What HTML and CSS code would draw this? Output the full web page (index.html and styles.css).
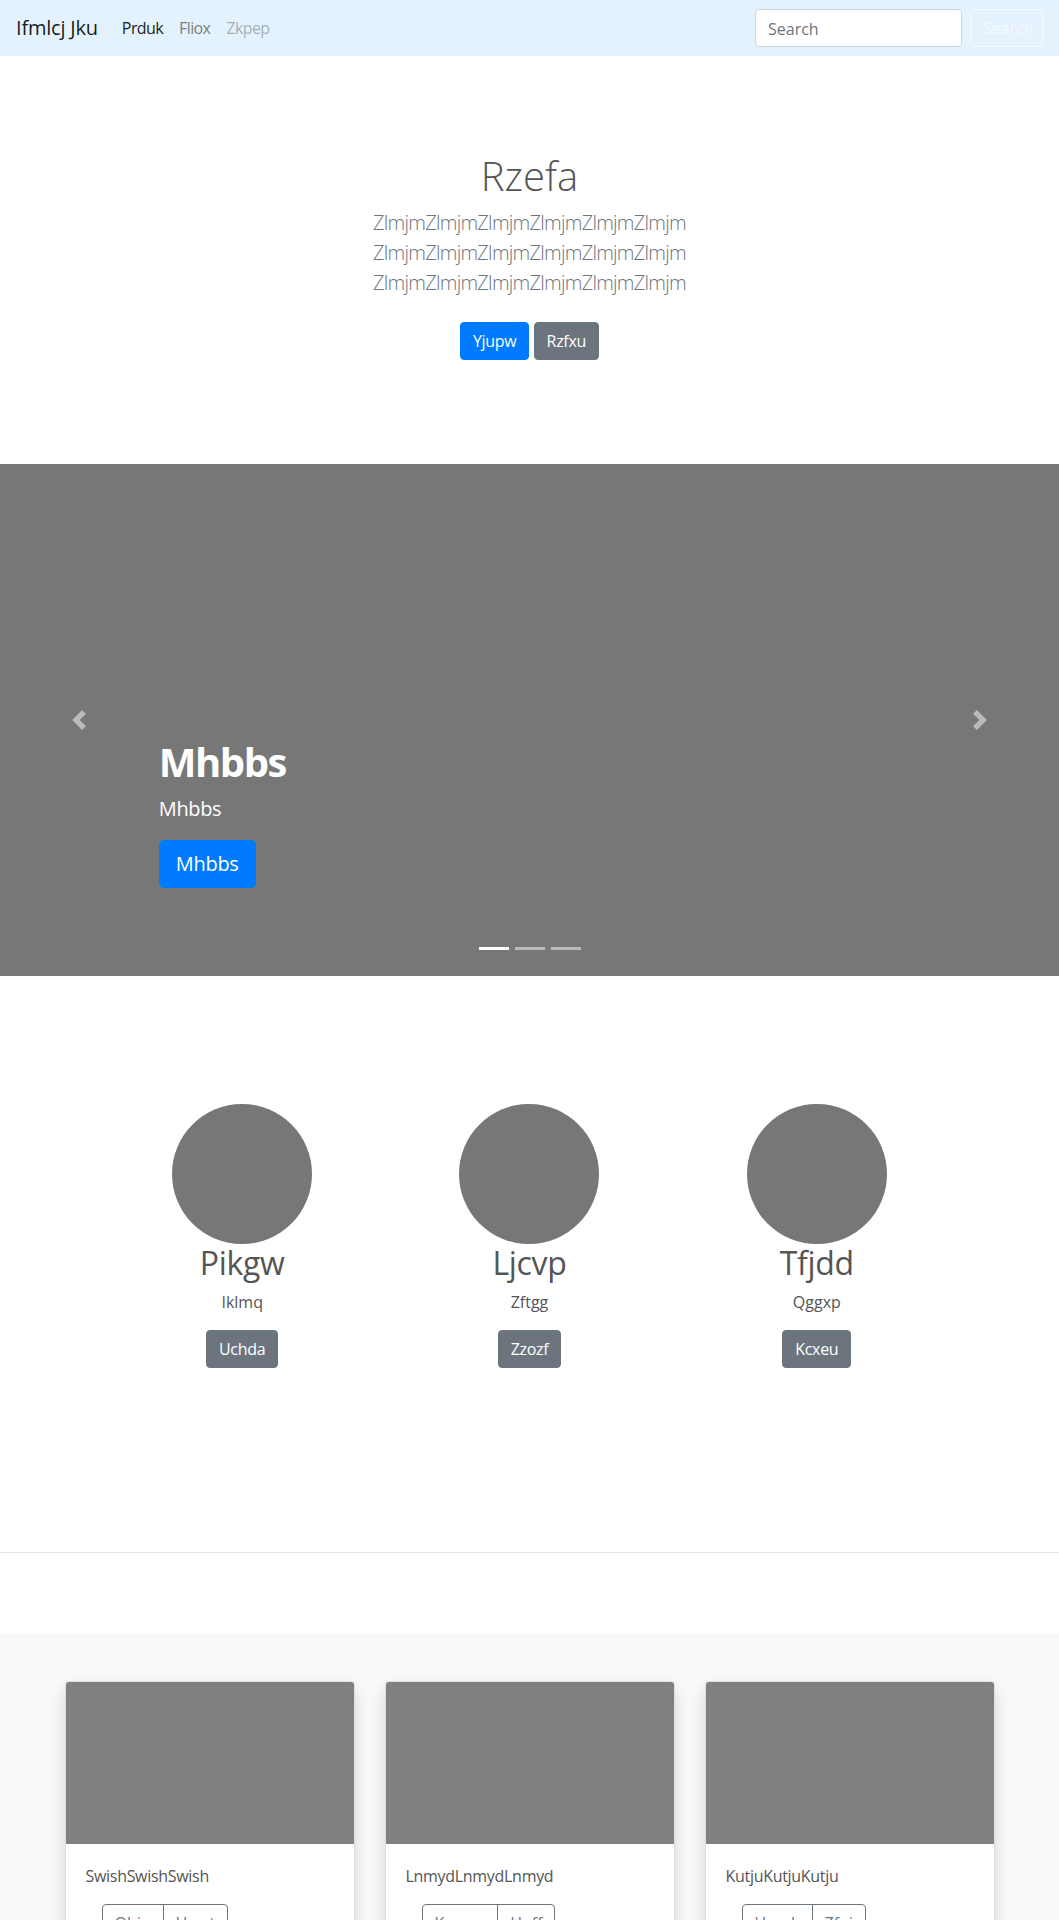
FILE: index.html
```html
<!DOCTYPE html>
<html lang="en">
<head>
<meta charset="utf-8">
<title>Ifmlcj Jku</title>
<link rel="stylesheet" href="styles.css">
</head>
<body>
<nav class="navbar">
  <a class="brand" href="#">Ifmlcj Jku</a>
  <ul class="nav">
    <li><a class="nav-link active" href="#">Prduk</a></li>
    <li><a class="nav-link" href="#">Fliox</a></li>
    <li><a class="nav-link disabled" href="#">Zkpep</a></li>
  </ul>
  <form class="search">
    <input class="search-input" type="text" placeholder="Search">
    <button class="search-btn" type="button">Search</button>
  </form>
</nav>

<section class="jumbotron">
  <div class="jumbo-inner">
    <h1 class="jumbo-heading">Rzefa</h1>
    <p class="lead">ZlmjmZlmjmZlmjmZlmjmZlmjmZlmjm ZlmjmZlmjmZlmjmZlmjmZlmjmZlmjm ZlmjmZlmjmZlmjmZlmjmZlmjmZlmjm</p>
    <p class="jumbo-actions"><a class="btn btn-primary" href="#">Yjupw</a> <a class="btn btn-secondary" href="#">Rzfxu</a></p>
  </div>
</section>

<div class="carousel">
  <ol class="indicators">
    <li class="active"></li>
    <li></li>
    <li></li>
  </ol>
  <div class="caption">
    <h1 class="caption-title">Mhbbs</h1>
    <p class="caption-sub">Mhbbs</p>
    <p class="caption-action"><a class="btn btn-primary btn-lg" href="#">Mhbbs</a></p>
  </div>
  <a class="control control-prev" href="#">
    <svg class="control-icon" viewBox="0 0 8 8"><path d="M5.25 0l-4 4 4 4 1.5-1.5-2.5-2.5 2.5-2.5-1.5-1.5z" fill="#fff"/></svg>
  </a>
  <a class="control control-next" href="#">
    <svg class="control-icon" viewBox="0 0 8 8"><path d="M2.75 0l-1.5 1.5 2.5 2.5-2.5 2.5 1.5 1.5 4-4-4-4z" fill="#fff"/></svg>
  </a>
</div>

<section class="marketing">
  <div class="feature">
    <div class="circle"></div>
    <h2 class="feature-title">Pikgw</h2>
    <p class="feature-text">Iklmq</p>
    <p class="feature-action"><a class="btn btn-secondary" href="#">Uchda</a></p>
  </div>
  <div class="feature">
    <div class="circle"></div>
    <h2 class="feature-title">Ljcvp</h2>
    <p class="feature-text">Zftgg</p>
    <p class="feature-action"><a class="btn btn-secondary" href="#">Zzozf</a></p>
  </div>
  <div class="feature">
    <div class="circle"></div>
    <h2 class="feature-title">Tfjdd</h2>
    <p class="feature-text">Qggxp</p>
    <p class="feature-action"><a class="btn btn-secondary" href="#">Kcxeu</a></p>
  </div>
</section>

<hr class="divider">

<section class="album">
  <div class="album-grid">
    <div class="card">
      <div class="card-img"></div>
      <div class="card-body">
        <p class="card-text">SwishSwishSwish</p>
        <div class="btn-group">
          <button class="btn-outline" type="button">Ohju</button><button class="btn-outline" type="button">Hwqt</button>
        </div>
      </div>
    </div>
    <div class="card">
      <div class="card-img"></div>
      <div class="card-body">
        <p class="card-text">LnmydLnmydLnmyd</p>
        <div class="btn-group">
          <button class="btn-outline" type="button">Kxmvu</button><button class="btn-outline" type="button">Hoff</button>
        </div>
      </div>
    </div>
    <div class="card">
      <div class="card-img"></div>
      <div class="card-body">
        <p class="card-text">KutjuKutjuKutju</p>
        <div class="btn-group">
          <button class="btn-outline" type="button">Ucxak</button><button class="btn-outline" type="button">Zfoi</button>
        </div>
      </div>
    </div>
  </div>
</section>
</body>
</html>
```

FILE: styles.css
```css
* { box-sizing: border-box; }

body {
  margin: 0;
  font-family: "Open Sans", "Noto Sans", "Liberation Sans", sans-serif;
  font-size: 16px;
  line-height: 1.5;
  color: #555;
  background: #fff;
}

a { text-decoration: none; }

p { margin: 0 0 16px; }

h1, h2 { margin: 0 0 8px; line-height: 1.2; }

/* Navbar */
.navbar {
  display: flex;
  align-items: center;
  height: 56px;
  padding: 8px 16px;
  background: #e3f2fd;
}

.brand {
  font-size: 20px;
  line-height: 30px;
  letter-spacing: -0.2px;
  color: rgba(0, 0, 0, 0.9);
  margin-right: 16px;
  padding: 5px 0;
}

.nav {
  display: flex;
  list-style: none;
  margin: 0;
  padding: 0;
  flex: 1;
}

.nav-link {
  display: block;
  padding: 8px;
  letter-spacing: -0.6px;
  color: rgba(0, 0, 0, 0.5);
}

.nav-link.active { color: rgba(0, 0, 0, 0.9); }
.nav-link.disabled { color: rgba(0, 0, 0, 0.3); }

.search {
  display: flex;
  align-items: center;
}

.search-input {
  width: 207px;
  height: 38px;
  padding: 7px 12px 5px;
  font: inherit;
  font-size: 16px;
  color: #495057;
  background: #fff;
  border: 1px solid #ced4da;
  border-radius: 4px;
  margin-right: 8px;
}

.search-input::placeholder { color: #6c757d; }

.search-btn {
  height: 38px;
  width: 73px;
  padding: 6px 12px;
  font: inherit;
  font-size: 16px;
  color: #f8f9fa;
  background: transparent;
  border: 1px solid #f8f9fa;
  border-radius: 4px;
}

/* Buttons */
.btn {
  display: inline-block;
  padding: 6px 12px;
  font-size: 16px;
  line-height: 24px;
  border: 1px solid transparent;
  border-radius: 4px;
  color: #fff;
  vertical-align: middle;
  letter-spacing: -0.3px;
}

.btn-primary { background: #007bff; border-color: #007bff; }
.btn-secondary { background: #6c757d; border-color: #6c757d; }

.btn-lg {
  padding: 8px 16px;
  font-size: 20px;
  line-height: 30px;
  border-radius: 5px;
}

/* Jumbotron */
.jumbotron {
  padding: 96px 32px;
  text-align: center;
}

.jumbo-inner {
  max-width: 450px;
  margin: 0 auto;
}

.jumbo-heading {
  font-size: 40px;
  font-weight: 300;
  color: #555;
}

.lead {
  font-size: 20px;
  font-weight: 300;
  line-height: 30px;
  letter-spacing: -0.75px;
  color: #6c757d;
}

.jumbo-actions { margin: 0; }
.jumbo-actions .btn { margin: 8px 0; }

/* Carousel */
.carousel {
  position: relative;
  height: 512px;
  background: #777;
  margin-bottom: 64px;
}

.indicators {
  position: absolute;
  left: 15%;
  right: 15%;
  bottom: 0;
  display: flex;
  justify-content: center;
  list-style: none;
  margin: 0 0 16px;
  padding: 0;
}

.indicators li {
  box-sizing: content-box;
  width: 30px;
  height: 3px;
  margin: 0 3px;
  background: #fff;
  background-clip: padding-box;
  border-top: 10px solid transparent;
  border-bottom: 10px solid transparent;
  opacity: 0.5;
}

.indicators li.active { opacity: 1; }

.caption {
  position: absolute;
  left: 15%;
  right: 15%;
  bottom: 52px;
  padding: 20px 0;
  color: #fff;
  text-align: left;
}

.caption-title {
  font-size: 40px;
  font-weight: 700;
  letter-spacing: -1.5px;
  color: #fff;
}

.caption-sub {
  font-size: 20px;
  line-height: 30px;
  letter-spacing: -0.4px;
}

.caption-action { margin-bottom: 16px; }

.control {
  position: absolute;
  top: 0;
  bottom: 0;
  width: 15%;
  display: flex;
  align-items: center;
  justify-content: center;
  opacity: 0.5;
}

.control-prev { left: 0; }
.control-next { right: 0; }

.control-icon {
  width: 20px;
  height: 20px;
}

/* Marketing */
.marketing {
  width: 862px;
  margin: 0 auto;
  padding: 64px 0;
  display: grid;
  grid-template-columns: repeat(3, 1fr);
}

.feature {
  text-align: center;
  margin-bottom: 24px;
}

.circle {
  width: 140px;
  height: 140px;
  border-radius: 50%;
  background: #777;
  margin: 0 auto;
}

.feature-title {
  font-size: 32px;
  font-weight: 400;
  letter-spacing: -0.3px;
  color: #555;
}

.feature-action { margin-bottom: 16px; }

/* Divider */
.divider {
  margin: 80px 0;
  border: 0;
  border-top: 1px solid rgba(0, 0, 0, 0.1);
}

/* Album */
.album {
  background: #f8f9fa;
  padding: 48px 0;
}

.album-grid {
  width: 930px;
  margin: 0 auto;
  display: grid;
  grid-template-columns: repeat(3, 1fr);
  column-gap: 30px;
}

.card {
  background: #fff;
  border: 1px solid rgba(0, 0, 0, 0.125);
  border-radius: 4px;
  overflow: hidden;
  box-shadow: 0 8px 16px rgba(0, 0, 0, 0.15);
  margin-bottom: 24px;
}

.card-img {
  height: 162px;
  background: #808080;
}

.card-body { padding: 20px; }

.card-text { color: #555; letter-spacing: -0.3px; }

.btn-group {
  display: inline-flex;
  margin-left: 16px;
}

.btn-outline {
  padding: 6px 12px;
  font: inherit;
  font-size: 16px;
  line-height: 24px;
  color: #6c757d;
  background: transparent;
  border: 1px solid #6c757d;
  border-radius: 0;
}

.btn-outline:first-child { border-radius: 4px 0 0 4px; }
.btn-outline:last-child { border-radius: 0 4px 4px 0; margin-left: -1px; }
```
